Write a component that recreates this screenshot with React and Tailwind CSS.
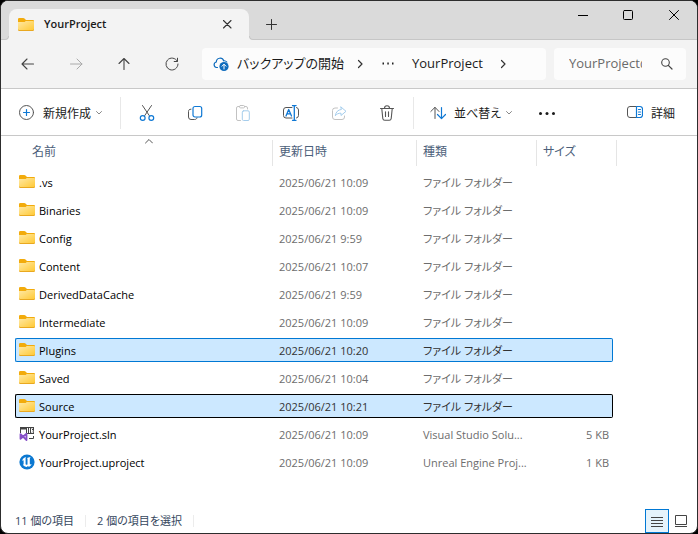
import React from "react";

const entries = [
  { name: ".vs", date: "2025/06/21 10:09" },
  { name: "Binaries", date: "2025/06/21 10:09" },
  { name: "Config", date: "2025/06/21 9:59" },
  { name: "Content", date: "2025/06/21 10:07" },
  { name: "DerivedDataCache", date: "2025/06/21 9:59" },
  { name: "Intermediate", date: "2025/06/21 10:09" },
  { name: "Plugins", date: "2025/06/21 10:20", state: "selected" },
  { name: "Saved", date: "2025/06/21 10:04" },
  { name: "Source", date: "2025/06/21 10:21", state: "focused" },
  { name: "YourProject.sln", date: "2025/06/21 10:09", type: "Visual Studio Solu...", size: "5 KB", icon: "sln" },
  { name: "YourProject.uproject", date: "2025/06/21 10:09", type: "Unreal Engine Proj...", size: "1 KB", icon: "unreal" },
];

const cellStyles = {
  normal: "border-transparent",
  selected: "border-[#0078d4] bg-[#cce8ff]",
  focused: "border-black bg-[#cce8ff]",
};

function Icon({ children, className = "size-4", box = "0 0 16 16", color = "#444" }) {
  return (
    <svg viewBox={box} className={`shrink-0 ${className}`} fill="none" stroke={color} strokeWidth="1" strokeLinecap="round" strokeLinejoin="round" aria-hidden="true">
      {children}
    </svg>
  );
}

function FolderIcon() {
  return (
    <svg viewBox="0 0 16 16" className="size-4 shrink-0" aria-hidden="true">
      <defs>
        <linearGradient id="folder" x1="0" y1="0" x2="1" y2="1">
          <stop offset="0" stopColor="#ffe9a6" />
          <stop offset="1" stopColor="#ffc935" />
        </linearGradient>
      </defs>
      <path d="M0 2.2Q0 1 1.2 1H5.3Q6 1 6.5 1.5L8 3H15Q16 3 16 4V8H0Z" fill="#f2ab0c" />
      <path d="M0 5H6Q6.7 5 7.2 4.5L7.7 4H15.2Q16 4 16 5V12.8Q16 14 14.8 14H1.2Q0 14 0 12.8Z" fill="#e9a820" />
      <path d="M0 5H6Q6.7 5 7.2 4.5L7.7 4H15.2Q16 4 16 5V12Q16 13.1 14.8 13.1H1.2Q0 13.1 0 12Z" fill="url(#folder)" />
    </svg>
  );
}

function SolutionIcon() {
  return (
    <svg viewBox="0 0 16 16" className="size-4 shrink-0" aria-hidden="true">
      <path d="M1 1H7V3.5H2V7H1Z" fill="#444" />
      <path d="M7 1H15V8H7Z" fill="#444" />
      <path d="M8.5 2V7M10.5 2V7M13.8 2.5H12.5V6.5H13.8V4.5H12.5" fill="none" stroke="#fff" />
      <path d="M14.5 10V12.5H10" fill="none" stroke="#444" />
      <path d="M1.5 8.2V12.8L7.5 7.8V14Z" fill="none" stroke="#8650c7" strokeWidth="1.8" strokeLinejoin="round" />
    </svg>
  );
}

function UnrealIcon() {
  return (
    <svg viewBox="0 0 16 16" className="size-4 shrink-0" aria-hidden="true">
      <circle cx="8" cy="8" r="7.6" fill="#0b78d1" />
      <path d="M3 7C3.6 5 5.2 3.5 7.2 3.1C6.7 3.6 6.6 4 6.6 4.6V10.3C6.9 10.8 7.6 10.9 8.5 10.4V5C8.5 4.4 8.3 4.2 7.9 4.3C8.8 3.4 10 3 11.7 2.9C11 3.5 10.8 4.2 10.8 5V9.7C10.8 10.4 11.4 10.7 12.6 9.9C11.9 11.6 10.8 12.5 9.8 12.8L8.8 11.9L7.9 13C6.2 13 4.6 12 3.8 10.8C4.4 10.9 4.6 10.6 4.6 10V6.7C4.6 5.8 3.9 6 3 7Z" fill="#fff" />
    </svg>
  );
}

function FileIcon({ kind }) {
  if (kind === "sln") return <SolutionIcon />;
  if (kind === "unreal") return <UnrealIcon />;
  return <FolderIcon />;
}

function ChevronDown() {
  return (
    <Icon className="size-2" box="0 0 8 8" color="#888">
      <path d="M1.5 2.5L4 5L6.5 2.5" />
    </Icon>
  );
}

function ChevronRight() {
  return (
    <Icon className="size-4" color="#333">
      <path d="M6.5 4.5L10 8L6.5 11.5" strokeWidth="1.2" />
    </Icon>
  );
}

function NavButton({ label, children }) {
  return (
    <button type="button" aria-label={label} className="flex h-8 w-12 items-center justify-center">
      {children}
    </button>
  );
}

function TitleBar() {
  return (
    <div className="flex h-[39px] shrink-0 items-stretch bg-[#dadada] pl-2 shadow-[inset_0_-1px_0_#c6c6c6]">
      <div className="relative mt-2 flex w-60 items-center rounded-t-lg bg-[#f3f3f3] pr-4 pl-[9px]">
        <span className="absolute bottom-0 -left-1 size-1 bg-[#f3f3f3]">
          <span className="block size-1 rounded-br border-r border-b border-[#c6c6c6] bg-[#dadada]" />
        </span>
        <span className="absolute -right-1 bottom-0 size-1 bg-[#f3f3f3]">
          <span className="block size-1 rounded-bl border-b border-l border-[#c6c6c6] bg-[#dadada]" />
        </span>
        <FolderIcon />
        <span className="ml-2.5 flex-1 text-[11px] font-semibold text-[#1b1b1b]">YourProject</span>
        <button type="button" aria-label="タブを閉じる" className="pb-0.5">
          <Icon className="size-3" box="0 0 12 12" color="#333">
            <path d="M2.5 2.5L10 10M10 2.5L2.5 10" strokeWidth="1.1" />
          </Icon>
        </button>
      </div>
      <button type="button" aria-label="新しいタブ" className="mt-2 flex w-[46px] items-center justify-center pb-0.5">
        <Icon className="size-3" box="0 0 12 12" color="#333">
          <path d="M5.5 1.5V11.5M.5 6.5H10.5" />
        </Icon>
      </button>
      <div className="ml-auto flex h-7">
        <button type="button" aria-label="最小化" className="flex w-[45px] items-center justify-center">
          <Icon className="size-3" box="0 0 12 12" color="#000"><path d="M1 6.5H11" strokeLinecap="butt" /></Icon>
        </button>
        <button type="button" aria-label="最大化" className="flex w-[45px] items-center justify-center">
          <Icon className="size-3" box="0 0 12 12" color="#000"><rect x="1.5" y="1.5" width="9" height="9" rx="1" /></Icon>
        </button>
        <button type="button" aria-label="閉じる" className="flex w-[47px] items-center justify-center">
          <Icon className="size-3" box="0 0 12 12" color="#000"><path d="M1.5 1.5L10.5 10.5M10.5 1.5L1.5 10.5" /></Icon>
        </button>
      </div>
    </div>
  );
}

function AddressRow() {
  return (
    <div className="flex h-[49px] shrink-0 items-center border-b border-[#c8c8c8] bg-[#f3f3f3] pr-[11px] pl-[3px]">
      <NavButton label="戻る">
        <Icon><path d="M13.5 8H2M7 3L2 8L7 13" strokeWidth="1.1" /></Icon>
      </NavButton>
      <NavButton label="進む">
        <Icon color="#aaa"><path d="M2.5 8H14M9 3L14 8L9 13" /></Icon>
      </NavButton>
      <NavButton label="上へ">
        <Icon><path d="M8 13.5V2.5M3 7.5L8 2.5L13 7.5" strokeWidth="1.1" /></Icon>
      </NavButton>
      <NavButton label="更新">
        <Icon><path d="M13.3 5.2A6 6 0 1 0 14 8M13.5 2.2V5.5H10.2" /></Icon>
      </NavButton>
      <nav className="ml-[6px] flex h-8 flex-1 items-center rounded bg-[#fcfcfc] pl-[11px] text-[13px] text-[#1b1b1b]">
        <Icon className="size-4" color="#0f6cbd">
          <path d="M4.5 11.5H3.5A2.8 2.8 0 0 1 3.3 6A3.8 3.8 0 0 1 10.7 4.8A3.2 3.2 0 0 1 13.8 6" strokeWidth="1.2" />
          <circle cx="11" cy="10.5" r="4.6" fill="#0f6cbd" stroke="none" />
          <path d="M11 13V8.4M9 10.2L11 8.2L13 10.2" stroke="#fff" />
        </Icon>
        <button type="button" className="ml-2 text-left whitespace-nowrap">バックアップの開始</button>
        <span className="ml-2"><ChevronRight /></span>
        <button type="button" aria-label="その他の階層" className="ml-3">
          <Icon className="size-4" color="#222">
            <path d="M2.5 7.5H4M7.3 7.5H8.8M12 7.5H13.5" strokeWidth="1.8" strokeLinecap="butt" />
          </Icon>
        </button>
        <button type="button" className="ml-4">YourProject</button>
        <span className="ml-3"><ChevronRight /></span>
      </nav>
      <label className="ml-2 flex h-8 w-[132px] items-center rounded bg-[#fcfcfc] pl-[15px]">
        <input type="text" aria-label="検索" placeholder="YourProjectの検索" className="w-[73px] bg-transparent text-[13px] text-clip placeholder:text-[#6a6a6a] outline-none" />
        <Icon className="ml-4 size-4" color="#444">
          <circle cx="7.5" cy="6.5" r="3.8" strokeWidth="1.1" />
          <path d="M10.3 9.3L14 13" strokeWidth="1.2" />
        </Icon>
      </label>
    </div>
  );
}

const BLUE = "#0f78d4";

function Toolbar() {
  return (
    <div className="flex h-[47px] shrink-0 items-center border-b border-[#c8c8c8] bg-white pt-0.5 pr-[22px] pl-[17px] text-[12px] text-[#1b1b1b]">
      <button type="button" className="flex items-center">
        <Icon color="#555">
          <circle cx="8.5" cy="7.5" r="7" />
          <path d="M8.5 4.5V10.5M5.5 7.5H11.5" stroke={BLUE} strokeWidth="1.2" />
        </Icon>
        <span className="mr-1 ml-[9px] pt-0.5">新規作成</span>
        <ChevronDown />
      </button>
      <span className="mr-0.5 ml-[17px] h-8 w-px bg-[#e8e8e8]" />
      <NavButton label="切り取り">
        <Icon color="#555">
          <path d="M3.5 0.5L10.3 10.6M12.5 0.5L5.7 10.6" />
          <circle cx="3.7" cy="13" r="2.4" stroke={BLUE} strokeWidth="1.2" />
          <circle cx="12.3" cy="13" r="2.4" stroke={BLUE} strokeWidth="1.2" />
        </Icon>
      </NavButton>
      <NavButton label="コピー">
        <Icon color="#555">
          <path d="M4 4.2C2.2 4.2 1.5 5 1.5 6.5V12A2.5 2.5 0 0 0 4 14.5H7.5C9 14.5 9.8 13.9 10 12.8" />
          <rect x="6" y="1.5" width="8.7" height="10.5" rx="2" stroke={BLUE} strokeWidth="1.2" />
        </Icon>
      </NavButton>
      <NavButton label="貼り付け">
        <Icon color="#c2c2c2">
          <path d="M5.5 15.5H3A1.5 1.5 0 0 1 1.5 14V3A1.5 1.5 0 0 1 3 1.5H4.5M9.5 1.5H11A1.5 1.5 0 0 1 12.5 3V4" />
          <rect x="4.5" y="0.5" width="5" height="2.4" rx="1" />
          <rect x="7.3" y="5.8" width="7" height="9.7" rx="1.3" stroke="#a5cdec" />
        </Icon>
      </NavButton>
      <NavButton label="名前の変更">
        <Icon color="#555">
          <path d="M9 2.5H3A2.5 2.5 0 0 0 .5 5V10.5A2.5 2.5 0 0 0 3 13H9M13.5 2.5A2.5 2.5 0 0 1 15.5 5V10.5A2.5 2.5 0 0 1 13.5 13" />
          <path d="M11.3 .8V15M9.5 .5H13M9.5 15.3H13M3 11L5.7 4.5L8.5 11M4 8.8H7.5" stroke={BLUE} strokeWidth="1.3" />
        </Icon>
      </NavButton>
      <NavButton label="共有">
        <Icon color="#c2c2c2">
          <path d="M6.5 3H4A2.5 2.5 0 0 0 1.5 5.5V12A2.5 2.5 0 0 0 4 14.5H11A2.5 2.5 0 0 0 13.5 12V11" />
          <path d="M10 2L15 6.3L10 10.5V8.2C7.5 8.2 5.7 8.8 4.3 10.8C4.8 7 7 4.8 10 4.5Z" stroke="#a5cdec" />
        </Icon>
      </NavButton>
      <NavButton label="削除">
        <Icon color="#555">
          <path d="M1.5 3.5H14.5M5.5 3.3C5.5 1.7 6.5.7 8 .7S10.5 1.7 10.5 3.3M2.8 3.7L3.8 13.5A2 2 0 0 0 5.8 15.3H10.2A2 2 0 0 0 12.2 13.5L13.2 3.7M6.5 6.7V11.5M9.5 6.7V11.5" strokeWidth="1.1" />
        </Icon>
      </NavButton>
      <span className="ml-0.5 h-8 w-px bg-[#e8e8e8]" />
      <button type="button" className="ml-4 flex items-center">
        <Icon color="#555">
          <path d="M5 13.5V2.5M.8 6.5L5 2.3L9 6.5" />
          <path d="M11.5 2.5V13.5M7.5 9.5L11.5 13.6L15.5 9.5" stroke={BLUE} strokeWidth="1.2" />
        </Icon>
        <span className="mr-1 ml-2 pt-0.5">並べ替え</span>
        <ChevronDown />
      </button>
      <button type="button" aria-label="もっと見る" className="ml-[26px]">
        <Icon className="size-4" color="#1b1b1b">
          <g fill="#1b1b1b" stroke="none">
            <circle cx="1.5" cy="8.5" r="1.5" /><circle cx="8" cy="8.5" r="1.5" /><circle cx="14.5" cy="8.5" r="1.5" />
          </g>
        </Icon>
      </button>
      <button type="button" className="ml-auto flex items-center gap-2">
        <Icon color="#555">
          <path d="M9 1.5H3A2.5 2.5 0 0 0 .5 4V10A2.5 2.5 0 0 0 3 12.5H9" />
          <path d="M9.5 1.5H13A2.5 2.5 0 0 1 15.5 4V10A2.5 2.5 0 0 1 13 12.5H9.5ZM11.5 4.5H13.5M11.5 7H13.5M11.5 9.5H13.5" stroke={BLUE} strokeWidth="1.2" />
        </Icon>
        <span className="pt-0.5">詳細</span>
      </button>
    </div>
  );
}

function FileTable() {
  const head = "h-[26px] border-r border-[#e5e5e5] p-0 pb-0.5 pl-1.5 text-left font-normal";
  return (
    <table className="ml-3.5 w-[602px] table-fixed border-separate border-spacing-x-0 border-spacing-y-1 text-[11px]">
      <colgroup>
        <col className="w-[258px]" />
        <col className="w-36" />
        <col className="w-[120px]" />
        <col className="w-[76px]" />
        <col className="w-1" />
      </colgroup>
      <thead className="text-[12px] text-[#4c607a]">
        <tr>
          <th scope="col" className="relative h-[26px] border-r border-[#e5e5e5] p-0 pb-0.5 pl-[17px] text-left font-normal" aria-sort="ascending">
            <span className="absolute -top-1 left-[130px]">
              <Icon className="h-2.5 w-2" box="0 0 8 10" color="#555"><path d="M.5 7L4 3.5L7.5 7" /></Icon>
            </span>
            名前
          </th>
          <th scope="col" className={head}>更新日時</th>
          <th scope="col" className={head}>種類</th>
          <th scope="col" colSpan={2} className={head}>サイズ</th>
        </tr>
      </thead>
      <tbody>
        {entries.map((e) => {
          const cell = cellStyles[e.state || "normal"];
          const tone = e.state ? "text-[#333]" : "text-[#6d6d6d]";
          return (
            <tr key={e.name} aria-selected={Boolean(e.state)} className="h-6">
              <td className={`rounded-l-xs border-y border-l p-0 pl-[3px] text-black ${cell}`}>
                <span className="flex items-center gap-1 leading-4"><FileIcon kind={e.icon} /><span className="pt-0.5">{e.name}</span></span>
              </td>
              <td className={`border-y p-0 pt-0.5 pl-1.5 leading-4 ${tone} ${cell}`}>{e.date}</td>
              <td className={`border-y p-0 pt-0.5 pl-1.5 leading-4 whitespace-nowrap ${tone} ${cell}`}>{e.type || "ファイル フォルダー"}</td>
              <td className={`rounded-r-xs border-y border-r p-0 pt-0.5 pr-[3px] text-right leading-4 ${tone} ${cell}`}>{e.size}</td>
              <td className="p-0" />
            </tr>
          );
        })}
      </tbody>
    </table>
  );
}

function StatusBar() {
  return (
    <footer className="mt-auto flex h-6 shrink-0 items-center pr-1 pl-3.5 text-[11px] text-[#34465c]">
      <span>11 個の項目</span>
      <span className="mx-[11px] h-3 w-px bg-[#ececec]" />
      <span>2 個の項目を選択</span>
      <span className="mx-[11px] h-3 w-px bg-[#ececec]" />
      <button type="button" aria-label="詳細表示" aria-pressed="true" className="ml-auto flex size-6 items-center justify-center border border-[#0078d4] bg-[#e5f3fb]">
        <Icon className="size-3" box="0 0 12 12" color="#444"><path d="M0 2.5H12M0 5.5H12M0 8.5H12M0 11.5H12" strokeLinecap="butt" /></Icon>
      </button>
      <button type="button" aria-label="大アイコン表示" className="flex size-6 items-center justify-center">
        <Icon className="size-3" box="0 0 12 12" color="#444"><path d="M.5 .5H11.5V9.5H.5ZM0 11.5H12" strokeLinecap="butt" /></Icon>
      </button>
    </footer>
  );
}

export default function App() {
  return (
    <div className="flex min-h-screen flex-col bg-black font-['Open_Sans','Noto_Sans_CJK_JP',sans-serif] [font-feature-settings:'palt']" lang="ja">
      <main className="flex flex-1 flex-col overflow-hidden rounded-lg border border-[#2d2d2d] bg-white">
        <TitleBar />
        <AddressRow />
        <Toolbar />
        <FileTable />
        <StatusBar />
      </main>
    </div>
  );
}
